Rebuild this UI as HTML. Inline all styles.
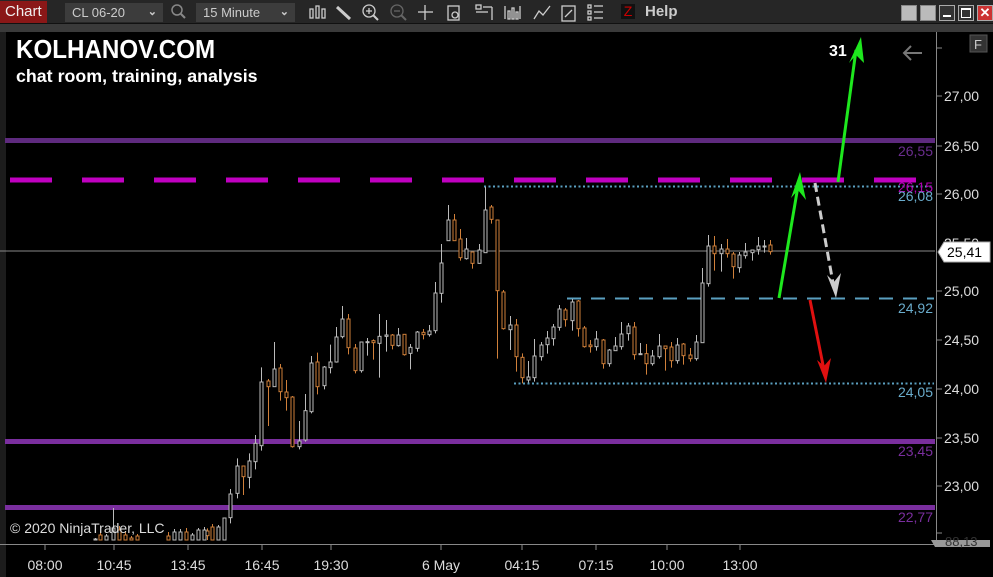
<!DOCTYPE html>
<html><head><meta charset="utf-8">
<style>
*{margin:0;padding:0;box-sizing:border-box}
body{width:993px;height:577px;overflow:hidden;background:#1c1c1c;font-family:"Liberation Sans",sans-serif;position:relative}
.tb{position:absolute;left:0;top:0;width:993px;height:24px;background:#262626;border-bottom:1px solid #111}
.band{position:absolute;left:0;top:24px;width:993px;height:8px;background:#3a3a3a}
.chartbtn{position:absolute;left:0;top:1px;width:47px;height:22px;background:#8a1717;color:#f0f0f0;font-size:15px;line-height:22px;padding-left:5px}
.dd{position:absolute;top:3px;height:19px;background:#3c3c3c;color:#ccc;font-size:13px;line-height:19px;padding-left:7px}
.dd b{position:absolute;right:6px;top:0;font-weight:bold;font-size:11px;color:#ccc}
.ic{position:absolute;top:3px}
.help{position:absolute;left:645px;top:3px;color:#ccc;font-weight:bold;font-size:15px}
.wb{position:absolute;top:5px;width:16px;height:16px;background:#bbb;border:1px solid #888}
.main{position:absolute;left:6px;top:32px;width:987px;height:545px;background:#000}
</style></head><body>
<div class="tb">
 <div class="chartbtn">Chart</div>
 <div class="dd" style="left:65px;width:98px">CL 06-20<b>&#8964;</b></div>
 <svg class="ic" style="left:170px" width="16" height="18"><circle cx="7" cy="7" r="5" stroke="#888" fill="none" stroke-width="1.5"/><line x1="11" y1="11" x2="15" y2="15" stroke="#888" stroke-width="2"/></svg>
 <div class="dd" style="left:196px;width:99px">15 Minute<b>&#8964;</b></div>
 <svg style="position:absolute;left:305px;top:3px" width="300" height="19" stroke="#ccc" fill="none" stroke-width="1.3">
  <g><rect x="5" y="6" width="3" height="9"/><rect x="11" y="3" width="3" height="12"/><rect x="17" y="6" width="3" height="9"/></g>
  <g><line x1="32" y1="4" x2="45" y2="16" stroke-width="3"/></g>
  <g><circle cx="64" cy="8" r="6"/><line x1="68" y1="12" x2="73" y2="17" stroke-width="2"/><line x1="61" y1="8" x2="67" y2="8"/><line x1="64" y1="5" x2="64" y2="11"/></g>
  <g stroke="#666"><circle cx="92" cy="8" r="6"/><line x1="96" y1="12" x2="101" y2="17" stroke-width="2"/><line x1="89" y1="8" x2="95" y2="8"/></g>
  <g><line x1="113" y1="9" x2="128" y2="9"/><line x1="120" y1="2" x2="120" y2="17"/></g>
  <g><rect x="143" y="3" width="11" height="14"/><circle cx="150" cy="12" r="3"/></g>
  <g><rect x="171" y="2" width="5" height="4"/><line x1="178" y1="4" x2="187" y2="4"/><line x1="187" y1="4" x2="187" y2="17"/><line x1="171" y1="9" x2="183" y2="9"/></g>
  <g><line x1="200" y1="3" x2="200" y2="16"/><rect x="203" y="8" width="2" height="8"/><rect x="207" y="5" width="2" height="11"/><rect x="211" y="9" width="2" height="7"/><line x1="215" y1="3" x2="215" y2="16"/></g>
  <g><polyline points="229,16 234,8 238,12 245,3"/></g>
  <g><rect x="257" y="3" width="13" height="15"/><line x1="260" y1="14" x2="267" y2="7"/></g>
  <g><rect x="283" y="2" width="3" height="3"/><rect x="283" y="8" width="3" height="3"/><rect x="283" y="14" width="3" height="3"/><line x1="289" y1="3" x2="298" y2="3"/><line x1="289" y1="9" x2="298" y2="9"/><line x1="289" y1="15" x2="298" y2="15"/></g>
 </svg>
 <div style="position:absolute;left:621px;top:4px;width:14px;height:15px;background:#111;color:#c00;font-size:14px;line-height:15px;text-align:center">Z</div>
 <div class="help">Help</div>
 <div class="wb" style="left:901px"></div><div class="wb" style="left:920px"></div>
 <div class="wb" style="left:939px;background:#333;border-color:#aaa"><div style="position:absolute;left:3px;top:9px;width:8px;height:2px;background:#fff"></div></div>
 <div class="wb" style="left:958px;background:#333;border-color:#aaa"><div style="position:absolute;left:2px;top:2px;width:10px;height:10px;border:1px solid #fff;border-top-width:2px"></div></div>
 <div class="wb" style="left:977px;background:#c33;border-color:#aaa;color:#fff;font-size:13px;line-height:13px;text-align:center;font-weight:bold">✕</div>
</div>
<div class="band"></div>
<div class="main"></div>
<svg id="ch" style="position:absolute;left:0;top:0" width="993" height="577" font-family="Liberation Sans, sans-serif">
 <rect x="5" y="138" width="930" height="5" fill="#5e2a7e"/>
 <rect x="5" y="439" width="930" height="5" fill="#7a2e9e"/>
 <rect x="5" y="505" width="930" height="5" fill="#7a2e9e"/>
 <line x1="10" y1="180" x2="934" y2="180" stroke="#c000c0" stroke-width="5" stroke-dasharray="42 30"/>
 <line x1="0" y1="251" x2="935" y2="251" stroke="#888" stroke-width="1"/>
 <line x1="484" y1="186.5" x2="934" y2="186.5" stroke="#5a9fc0" stroke-width="2" stroke-dasharray="2 2.5"/>
 <line x1="514" y1="383.5" x2="934" y2="383.5" stroke="#5a9fc0" stroke-width="2" stroke-dasharray="2 2.5"/>
 <line x1="567" y1="298.5" x2="934" y2="298.5" stroke="#5a9fc0" stroke-width="2" stroke-dasharray="14 10"/>
 <g id="cd"></g>
 <g font-size="14" text-anchor="end">
  <text x="933" y="156" fill="#6a2d8e">26,55</text>
  <text x="933" y="192" fill="#b000b0">26,15</text>
  <text x="933" y="201" fill="#6aaccc">26,08</text>
  <text x="933" y="313" fill="#6aaccc">24,92</text>
  <text x="933" y="397" fill="#6aaccc">24,05</text>
  <text x="933" y="456" fill="#7a2e9e">23,45</text>
  <text x="933" y="522" fill="#7a2e9e">22,77</text>
 </g>
 <line x1="936.5" y1="32" x2="936.5" y2="545" stroke="#888"/>
 <line x1="0" y1="544.5" x2="936" y2="544.5" stroke="#888"/>
 <g stroke="#888">
  <line x1="937" y1="48" x2="942" y2="48"/><line x1="937" y1="96" x2="942" y2="96"/><line x1="937" y1="146" x2="942" y2="146"/><line x1="937" y1="194" x2="942" y2="194"/><line x1="937" y1="291" x2="942" y2="291"/><line x1="937" y1="340" x2="942" y2="340"/><line x1="937" y1="389" x2="942" y2="389"/><line x1="937" y1="438" x2="942" y2="438"/><line x1="937" y1="486" x2="942" y2="486"/><line x1="937" y1="533" x2="942" y2="533"/>
  <line x1="45" y1="545" x2="45" y2="550"/><line x1="114" y1="545" x2="114" y2="550"/><line x1="188" y1="545" x2="188" y2="550"/><line x1="262" y1="545" x2="262" y2="550"/><line x1="331" y1="545" x2="331" y2="550"/><line x1="441" y1="545" x2="441" y2="550"/><line x1="522" y1="545" x2="522" y2="550"/><line x1="596" y1="545" x2="596" y2="550"/><line x1="667" y1="545" x2="667" y2="550"/><line x1="740" y1="545" x2="740" y2="550"/>
 </g>
 <g fill="#ddd" font-size="14">
  <text x="944" y="101">27,00</text><text x="944" y="151">26,50</text><text x="944" y="199">26,00</text><text x="944" y="248">25,50</text><text x="944" y="296">25,00</text><text x="944" y="345">24,50</text><text x="944" y="394">24,00</text><text x="944" y="443">23,50</text><text x="944" y="491">23,00</text>
 </g>
 <polygon points="931,540 990,540 990,547 935,547" fill="#999"/>
 <text x="945" y="546" fill="#333" font-size="13">88,13</text>
 <polygon points="938,252 944,242 990,242 990,262 944,262" fill="#fff" stroke="#aaa"/>
 <text x="947" y="257" fill="#000" font-size="14">25,41</text>
 <rect x="970" y="35" width="17" height="17" fill="#333" stroke="#555"/>
 <text x="974" y="49" fill="#ccc" font-size="13">F</text>
 <g fill="#ddd" font-size="14" text-anchor="middle">
  <text x="45" y="570">08:00</text><text x="114" y="570">10:45</text><text x="188" y="570">13:45</text><text x="262" y="570">16:45</text><text x="331" y="570">19:30</text><text x="441" y="570">6 May</text><text x="522" y="570">04:15</text><text x="596" y="570">07:15</text><text x="667" y="570">10:00</text><text x="740" y="570">13:00</text>
 </g>
 <g stroke-width="3" fill="none">
  <line x1="779" y1="298" x2="798" y2="186" stroke="#1ee81e"/>
  <line x1="838" y1="182" x2="856" y2="50" stroke="#1ee81e"/>
  <line x1="810" y1="300" x2="824" y2="370" stroke="#e01010"/>
  <line x1="815" y1="183" x2="833" y2="283" stroke="#ccc" stroke-dasharray="9 5"/>
 </g>
 <polygon points="800,172 791,198 798,190 806,200" fill="#1ee81e"/>
 <polygon points="861,37 849,63 856,55 864,63" fill="#1ee81e"/>
 <polygon points="826,383 817,360 824,366 831,358" fill="#e01010"/>
 <polygon points="836,298 827,275 834,282 841,273" fill="#ccc"/>
 <text x="829" y="56" fill="#fff" font-size="16" font-weight="bold">31</text>
 <g stroke="#777" stroke-width="2" fill="none"><line x1="904" y1="53" x2="922" y2="53"/><polyline points="911,46 904,53 911,60"/></g>
 <text x="10" y="533" fill="#ddd" font-size="14">© 2020 NinjaTrader, LLC</text>
 <text x="16" y="58" fill="#fff" font-size="26" font-weight="bold" transform="translate(16 0) scale(0.93 1) translate(-16 0)">KOLHANOV.COM</text>
 <text x="16" y="82" fill="#fff" font-size="18" font-weight="bold" transform="translate(16 0) scale(0.99 1) translate(-16 0)">chat room, training, analysis</text>
</svg>
<script>
var A=[[20,1045,1053,1067,1080,1],[37,1063,1066,1080,1080,1],[55,1035,1075,1080,1080,0],[73,1015,1015,1080,1080,0],[91,927,942,1013,1030,0],[112,835,858,940,955,0],[130,858,858,890,945,1],[148,820,843,892,925,0],[166,765,790,845,868,0],[184,562,606,797,812,0],[205,597,603,620,738,1],[223,486,567,620,620,0],[241,552,564,635,662,1],[259,600,636,653,692,1],[277,648,651,800,803,1],[298,723,783,800,808,0],[316,642,692,780,785,0],[334,528,549,695,700,0],[352,518,546,620,643,1],[373,558,561,617,628,0],[391,494,546,563,580,0],[409,441,471,546,548,0],[427,378,417,470,475,0],[445,402,417,503,523,1],[466,492,504,572,580,1],[484,486,486,572,578,0],[502,474,485,487,527,0],[520,478,482,488,539,1],[538,402,469,490,593,0],[559,420,465,469,515,0],[577,462,465,496,508,1],[595,444,465,497,500,0],[613,462,463,524,527,1],[631,492,502,520,568,0],[652,453,456,505,515,0],[670,447,457,464,478,1],[688,435,453,464,470,0],[706,306,339,452,460,0],[724,192,249,340,368,0],[745,75,120,182,182,0],[763,102,120,182,182,1],[781,147,177,233,242,1],[799,174,207,236,239,0],[817,215,216,250,266,1],[838,192,210,250,251,0],[856,21,90,218,218,0],[874,75,81,118,131,1],[892,120,120,332,536,1],[910,330,336,446,449,1],[931,408,435,449,510,0],[949,417,435,530,575,1]];
var B=[[127,520,532,593,610,1],[145,543,591,600,608,0],[163,477,528,593,605,0],[184,486,495,530,542,0],[202,453,474,494,521,0],[220,432,441,476,497,0],[238,375,387,442,452,0],[256,384,390,419,440,1],[277,357,366,422,452,0],[295,360,363,446,470,1],[313,438,444,500,503,1],[331,480,495,500,518,1],[349,453,477,500,512,0],[370,477,480,551,566,1],[388,507,510,551,560,0],[406,471,498,512,512,0],[424,426,462,500,509,0],[445,429,438,461,482,0],[463,426,441,524,539,1],[481,489,521,523,524,0],[499,492,521,551,584,1],[517,510,528,551,557,0],[538,462,498,530,536,0],[556,498,498,506,572,1],[574,486,501,542,563,1],[592,474,495,542,551,0],[610,489,492,527,554,1],[631,504,525,536,545,1],[649,465,486,536,542,0],[667,264,309,488,488,0],[685,165,198,311,320,0],[703,168,198,221,272,1],[724,192,207,221,275,0],[742,177,207,221,233,1],[760,216,222,260,296,1],[778,216,225,263,278,0],[796,189,216,227,236,0],[817,210,210,218,242,0],[835,171,198,209,224,0],[853,180,198,200,218,0],[871,180,195,215,224,1]];
var s='';
function add(x,h,o,c,l,col){var co=col?'#d0803a':'#bbb';x=Math.round(x)+0.5;
s+='<line x1="'+x+'" y1="'+h+'" x2="'+x+'" y2="'+l+'" stroke="'+co+'"/>';
s+='<rect x="'+(x-1.5)+'" y="'+o+'" width="3" height="'+Math.max(1,c-o)+'" fill="#000" stroke="'+co+'"/>';}
A.forEach(function(a){add(a[0]/3+200,a[1]/3+180,a[2]/3+180,a[3]/3+180,a[4]/3+180,a[5]);});
B.forEach(function(a){add(a[0]/3+480,a[1]/3+180,a[2]/3+180,a[3]/3+180,a[4]/3+180,a[5]);});
var C=[[95,538,539,540,540,0],[100,531,535,540,540,1],[106,534,536,540,540,0],[113,508,528,540,540,0],[119,526,530,540,540,1],[125,531,535,540,540,1],[131,536,538,540,540,1],[137,534,536,540,540,1],[168,532,536,540,540,1],[174,529,532,540,540,0],[180,529,532,540,540,0],[186,528,532,540,540,1],[192,533,535,540,540,0],[198,528,530,540,540,0],[204,527,530,540,540,0],[212,524,527,540,540,1],[218,525,527,540,540,0],[224,518,518,540,540,0]];
C.forEach(function(a){add(a[0],a[1],a[2],a[3],a[4],a[5]);});
document.getElementById('cd').innerHTML=s;
</script>
</body></html>
